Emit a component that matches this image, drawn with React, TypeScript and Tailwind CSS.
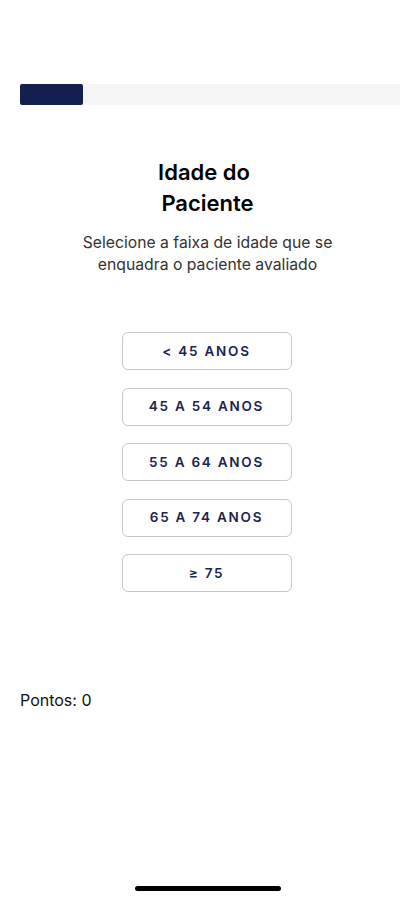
import React from "react";

const options = ["< 45 ANOS", "45 A 54 ANOS", "55 A 64 ANOS", "65 A 74 ANOS", "≥ 75"];

export default function App() {
  return (
    <div
      className="relative w-[415px] h-[900px] bg-white text-black flex flex-col"
      style={{ fontFamily: "Inter, 'Liberation Sans', sans-serif" }}
    >
      <div className="mt-[84px] ml-5 mr-[15px] h-[21px] bg-[#f5f5f5] flex">
        <div className="w-[63px] h-full bg-[#13204f] rounded-[2px]" />
      </div>

      <h1 className="mt-[52px] text-center text-[22px] leading-[31px] font-semibold">
        <span className="pr-[7px]">Idade do</span>
        <br />
        Paciente
      </h1>
      <p className="mt-[13px] text-center text-[15.75px] leading-[22px] text-[#333]">
        Selecione a faixa de idade que se
        <br />
        enquadra o paciente avaliado
      </p>

      <div className="mt-[56px] flex flex-col items-center gap-[17.5px] pr-[2px]">
        {options.map((opt) => (
          <button
            key={opt}
            className="w-[170px] h-[38px] border border-[#c8c8c8] rounded-[6px] text-[13.5px] font-semibold tracking-[0.13em] text-[#1c2450]"
          >
            {opt}
          </button>
        ))}
      </div>

      <p className="mt-[97px] ml-5 text-[16px] leading-[22px] text-[#111]">Pontos: 0</p>

      <div className="absolute left-[135px] top-[886px] w-[146px] h-[5px] rounded-full bg-black" />
    </div>
  );
}
